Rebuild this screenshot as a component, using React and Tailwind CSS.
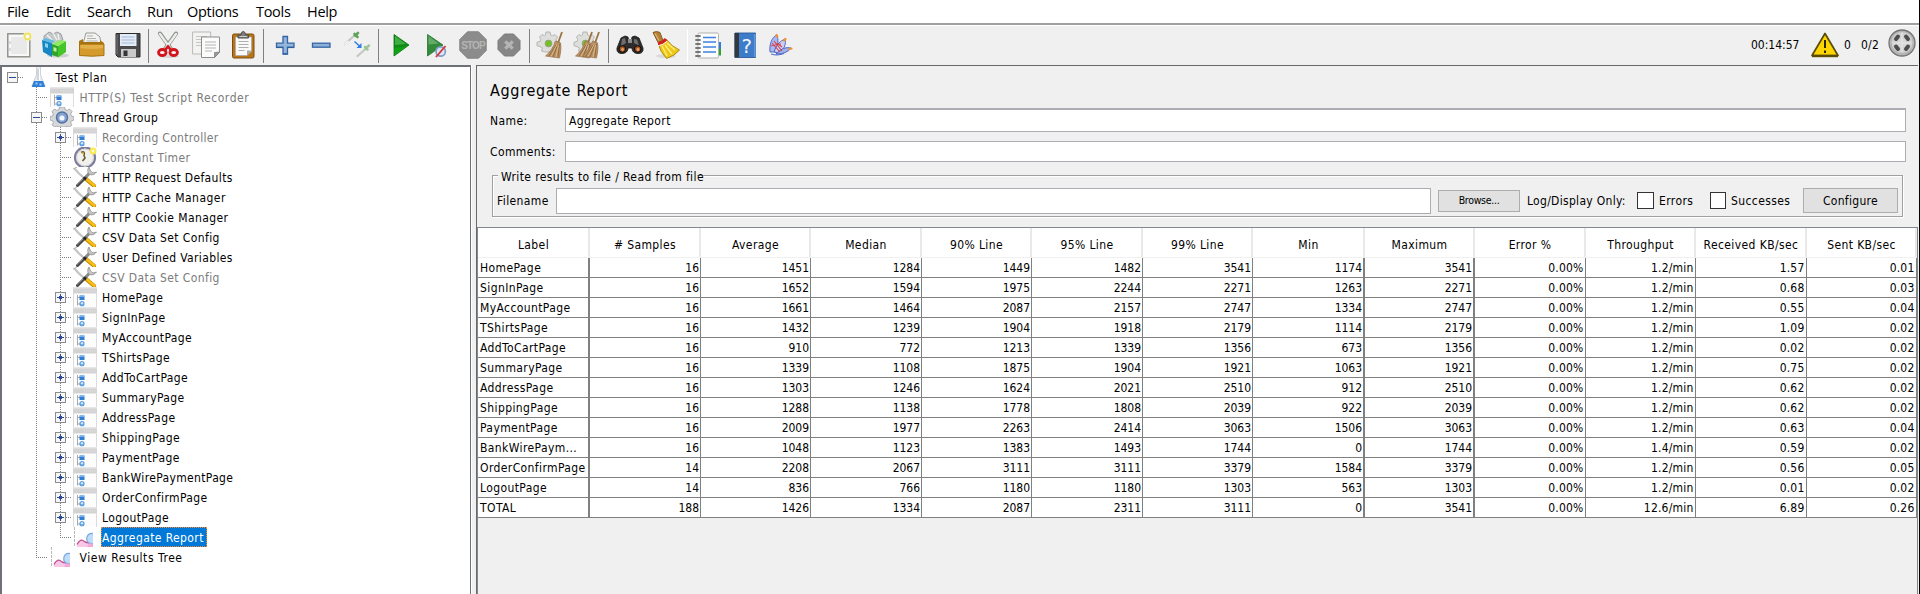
const MENU = [
  ['File', 'w-[39px]'],
  ['Edit', 'w-[41px]'],
  ['Search', 'w-[60px]'],
  ['Run', 'w-[40px]'],
  ['Options', 'w-[69px]'],
  ['Tools', 'w-[51px]'],
  ['Help', 'w-[40px]'],
];

const HEADERS = ['Label', '# Samples', 'Average', 'Median', '90% Line', '95% Line', '99% Line', 'Min', 'Maximum', 'Error %', 'Throughput', 'Received KB/sec', 'Sent KB/sec'];

const ROWS = [
  ['HomePage', '16', '1451', '1284', '1449', '1482', '3541', '1174', '3541', '0.00%', '1.2/min', '1.57', '0.01'],
  ['SignInPage', '16', '1652', '1594', '1975', '2244', '2271', '1263', '2271', '0.00%', '1.2/min', '0.68', '0.03'],
  ['MyAccountPage', '16', '1661', '1464', '2087', '2157', '2747', '1334', '2747', '0.00%', '1.2/min', '0.55', '0.04'],
  ['TShirtsPage', '16', '1432', '1239', '1904', '1918', '2179', '1114', '2179', '0.00%', '1.2/min', '1.09', '0.02'],
  ['AddToCartPage', '16', '910', '772', '1213', '1339', '1356', '673', '1356', '0.00%', '1.2/min', '0.02', '0.02'],
  ['SummaryPage', '16', '1339', '1108', '1875', '1904', '1921', '1063', '1921', '0.00%', '1.2/min', '0.75', '0.02'],
  ['AddressPage', '16', '1303', '1246', '1624', '2021', '2510', '912', '2510', '0.00%', '1.2/min', '0.62', '0.02'],
  ['ShippingPage', '16', '1288', '1138', '1778', '1808', '2039', '922', '2039', '0.00%', '1.2/min', '0.62', '0.02'],
  ['PaymentPage', '16', '2009', '1977', '2263', '2414', '3063', '1506', '3063', '0.00%', '1.2/min', '0.63', '0.04'],
  ['BankWirePaym...', '16', '1048', '1123', '1383', '1493', '1744', '0', '1744', '0.00%', '1.4/min', '0.59', '0.02'],
  ['OrderConfirmPage', '14', '2208', '2067', '3111', '3111', '3379', '1584', '3379', '0.00%', '1.2/min', '0.56', '0.05'],
  ['LogoutPage', '14', '836', '766', '1180', '1180', '1303', '563', '1303', '0.00%', '1.2/min', '0.01', '0.02'],
  ['TOTAL', '188', '1426', '1334', '2087', '2311', '3111', '0', '3541', '0.00%', '12.6/min', '6.89', '0.26'],
];

const COLS = 'grid grid-cols-[112px_111px_110px_111px_110px_111px_110px_112px_110px_111px_110px_111px_110px]';
const WIDE_RULES = [0, 7, 8];

// label, depth, icon, expander ('+', '-' or none), disabled, tracking
const TREE = [
  ['Test Plan', 0, 'flask', '-', false, 'tracking-[0.5px]'],
  ['HTTP(S) Test Script Recorder', 1, 'ctrl', '', true, 'tracking-[0.57px]'],
  ['Thread Group', 1, 'gear', '-', false, 'tracking-[0.4px]'],
  ['Recording Controller', 2, 'ctrl', '+', true, 'tracking-[0.3px]'],
  ['Constant Timer', 2, 'timer', '', true],
  ['HTTP Request Defaults', 2, 'tools', '', false, 'tracking-[0.35px]'],
  ['HTTP Cache Manager', 2, 'tools', '', false, 'tracking-[0.47px]'],
  ['HTTP Cookie Manager', 2, 'tools', '', false, 'tracking-[0.42px]'],
  ['CSV Data Set Config', 2, 'tools', '', false],
  ['User Defined Variables', 2, 'tools', '', false, 'tracking-[0.36px]'],
  ['CSV Data Set Config', 2, 'tools', '', true],
  ['HomePage', 2, 'ctrl', '+', false],
  ['SignInPage', 2, 'ctrl', '+', false],
  ['MyAccountPage', 2, 'ctrl', '+', false, 'tracking-[0.35px]'],
  ['TShirtsPage', 2, 'ctrl', '+', false],
  ['AddToCartPage', 2, 'ctrl', '+', false],
  ['SummaryPage', 2, 'ctrl', '+', false],
  ['AddressPage', 2, 'ctrl', '+', false],
  ['ShippingPage', 2, 'ctrl', '+', false],
  ['PaymentPage', 2, 'ctrl', '+', false],
  ['BankWirePaymentPage', 2, 'ctrl', '+', false, 'tracking-[0.35px]'],
  ['OrderConfirmPage', 2, 'ctrl', '+', false],
  ['LogoutPage', 2, 'ctrl', '+', false],
  ['Aggregate Report', 2, 'chart', '', false],
  ['View Results Tree', 1, 'chart', '', false, 'tracking-[0.55px]'],
];

const TREE_ICONS = {
  flask: (
    <>
      <path d="M10.500 0h4v8L18.500 19.500H5.500L10 8z" fill="#e9edf0" />
      <path d="M10.500 0v8L6 19M14.500 0v8L19 19" fill="none" stroke="#c9d0d6" strokeWidth=".9" />
      <path d="M8 14h9l2.300 6H5.700z" fill="#2f7fd6" />
      <path d="M9.500 15.500h2v2h-2zM13.500 16.500h2v2h-2z" fill="#9cc8f5" />
      <path d="M12 2v11" stroke="#b4bdc6" />
      <path d="M13.500 2v11" stroke="#fff" />
    </>
  ),
  ctrl: (
    <>
      <path d="M0 0h24v20H0z" fill="#fdfdfd" />
      <path d="M0 0h24v6.500H0z" fill="#d3d3d3" />
      <path d="M0 0h24v1.500H0z" fill="#e6e6e6" />
      <path d="M11 4h11" stroke="#e4e4e4" strokeDasharray="1 1" />
      <path d="M.5 6v14M23.500 6v14" stroke="#dcdcdc" />
      <path d="M4.500 8v10.500M4.500 10.500H7M4.500 17H7" stroke="#a8a8a8" fill="none" />
      <rect x="6.500" y="8.500" width="5" height="4.500" fill="#2f7fd6" />
      <rect x="7" y="8.500" width="4" height="1.500" fill="#7db2ea" />
      <circle cx="9" cy="16.700" r="2.600" fill="#5b9fe3" />
      <circle cx="9" cy="16.300" r="1.200" fill="#cfe4fa" />
    </>
  ),
  gear: (
    <>
      <path d="M9.500 0h5l.6 2.600 2.200.8L19.500 2l2.500 2.500L20.600 7l.8 2 2.600.7v3.300l-2.600.8-.8 2 1.400 2L19.500 20l-2.200-.8-2.200.8H8.900l-2.200-.8L4.500 20 2 17.800l1.400-2-.8-2L0 13V9.700L2.600 9l.8-2L2 4.500 4.500 2l2.200 1.400 2.200-.8z" fill="#d6d7d9" stroke="#a3a5a9" strokeWidth=".9" />
      <circle cx="12" cy="10.500" r="6.200" fill="#54709f" />
      <circle cx="12" cy="10.500" r="4.800" fill="#86a2d0" />
      <circle cx="12" cy="11" r="2.600" fill="#f3f6fa" />
    </>
  ),
  timer: (
    <>
      <circle cx="12" cy="10.500" r="10" fill="#f1f1ee" stroke="#7f7d9c" strokeWidth="2.200" />
      <circle cx="12" cy="10.500" r="8.300" fill="none" stroke="#d5d5d5" />
      <path d="M8 5.500c3-1.500 4 0 3 3l1 2.500-2.500 3" fill="none" stroke="#6b5b36" strokeWidth="1.600" />
      <path d="M8 5l3 .5v3z" fill="#caa63c" />
      <circle cx="20" cy="4" r="3.500" fill="#f7e94e" />
      <circle cx="20" cy="4" r="1.500" fill="#fffbd0" />
    </>
  ),
  tools: (
    <>
      <path d="M1.500 1.500l4 4.500 6 5.500" stroke="#c4c4c4" strokeWidth="2.200" fill="none" />
      <path d="M0 2l4-2" stroke="#b0b0b0" />
      <path d="M13 12l8 6.800" stroke="#b98200" strokeWidth="4" strokeLinecap="round" />
      <path d="M13.500 12l7.700 6.600" stroke="#f6bd14" strokeWidth="2.800" strokeLinecap="round" />
      <path d="M4.500 18.500L13 10" stroke="#4a4a4a" strokeWidth="3" strokeLinecap="round" />
      <path d="M4 17.500L11 11" stroke="#999" strokeWidth="1" />
      <path d="M13 10l3.500-4" stroke="#8b8b8b" strokeWidth="3" />
      <path d="M16 0c-2 2.500-1.500 6.500 1 7.500s4.500 0 6.500-2.500l-3.500 1-2.500-2z" fill="#c9c9c9" stroke="#8d8d8d" strokeWidth=".8" />
      <path d="M10.500 10.500l2.500 2" stroke="#222" strokeWidth="2" />
    </>
  ),
  chart: (
    <>
      <path d="M1.500 0v20" stroke="#b9b9b9" strokeDasharray="3 1" />
      <path d="M4 20v-2.500c2-3.500 4-5 6-4s2.500 1.500 4 .5 3-1.500 6 .5V20z" fill="#f8c8e6" />
      <path d="M4 17.500c2-3.500 4-5 6-4 2 1.200 2.500 2.500 6 2.500" fill="none" stroke="#c0498f" strokeWidth="1.200" />
      <path d="M20 6.500c-4-.5-6.500 2-6.300 5.500s2.500 5 6.300 4.500z" fill="#bfdcf8" />
      <path d="M20 6.500c-4-.5-6.500 2-6.300 5.500s2.500 5 6.300 4.500" fill="none" stroke="#7ba7e0" strokeWidth="1.200" />
      <path d="M16 16.500h4V20h-6z" fill="#f3a8d8" />
    </>
  ),
};

function Guide({ first, rule, tee, box, cap }) {
  const end = cap ? 10.5 : 20;
  return (
    <svg className={first ? 'h-5 w-[22px] shrink-0' : 'h-5 w-6 shrink-0'} viewBox={first ? '2 0 22 20' : '0 0 24 20'} shapeRendering="crispEdges">
      {rule && <path d={`M12.500 0V${end}`} stroke="#808080" strokeDasharray="1 1" />}
      {tee && <path d="M12 10.500H24" stroke="#808080" strokeDasharray="1 1" />}
      {box && (
        <>
          <rect x="7.500" y="5.500" width="10" height="10" fill="#f6f6f6" stroke="#8c8c8c" />
          <path d="M9 10h7v1H9z" fill="#2c4a96" />
          {box === '+' && <path d="M12 7h1v7h-1zM10 10h5v1h-5zM11 9h3v3h-3z" fill="#2c4a96" />}
        </>
      )}
    </svg>
  );
}

function TreeRow({ item }) {
  const [label, depth, icon, box, off, tracking = 'tracking-[0.4px]'] = item;
  const last = label === 'View Results Tree';
  const selected = label === 'Aggregate Report';
  return (
    <div className="flex h-5">
      {depth === 0 && <Guide first tee box={box} />}
      {depth > 0 && <Guide first />}
      {depth === 1 && <Guide rule tee box={box} cap={last} />}
      {depth === 2 && <Guide rule />}
      {depth === 2 && <Guide rule tee box={box} cap={selected} />}
      <svg className={depth === 2 ? 'ml-px h-5 w-6 shrink-0' : 'ml-0.5 h-5 w-6 shrink-0'} viewBox="0 0 24 20">
        {TREE_ICONS[icon]}
      </svg>
      {selected ? (
        <span className="ml-1 h-5 w-[106px] bg-[#0078d7] pt-px pl-px leading-5 text-white outline-1 -outline-offset-1 outline-dotted outline-[#ff8728]">
          {label}
        </span>
      ) : (
        <span className={`${off ? 'text-[#7b7b7b]' : 'text-black'} ${depth === 2 ? 'ml-[5px]' : 'ml-[5.5px]'} ${tracking} pt-px leading-5`}>{label}</span>
      )}
    </div>
  );
}

const BROOM = (
  <>
    <path d="M26 1L22 12" stroke="#9a7340" strokeWidth="1.800" />
    <path d="M19.500 10l5 2c1 5 0 10-1 15L9.500 25c4.500-3.500 8-9 10-15z" fill="#bb9162" stroke="#96704a" strokeWidth=".7" />
    <path d="M13 25l7-11M17 26l4.500-12M22 26l1.500-13" stroke="#87643c" strokeWidth=".8" />
    <path d="M15 25.500l6-12M20 26l2.500-12" stroke="#dcb98c" strokeWidth=".9" />
  </>
);

const COG = (
  <>
    <path d="M10 1h4l.6 3 2 .8L19 3.500 21.500 6 20 8.500l1 2 3 .7v3.500l-3 .8-4 5-3.500.5H9l-3.500-1L6.500 17 4 15.500l-3-.8v-3.500l3-.7.8-2L3.500 6 6 3.500l2.400 1.300 1-.8z" fill="#dedfdd" stroke="#aeb0ad" strokeWidth=".9" />
    <circle cx="12.500" cy="12.500" r="3.400" fill="#73c31c" stroke="#999" strokeWidth=".8" />
  </>
);

const ICONS = {
  fresh: (
    <>
      <rect x="2.800" y="2.800" width="22" height="23" fill="#f8f8f8" stroke="#8b8b86" strokeWidth="1.400" />
      <rect x="6" y="6" width="16" height="17" fill="#e9e9ea" />
      <path d="M5 10v3M5 17v3" stroke="#bbb" />
      <circle cx="22.500" cy="5.500" r="4.500" fill="#f9f1a0" />
      <circle cx="22.500" cy="5.500" r="2.800" fill="#fff" stroke="#ecdc5c" strokeWidth="1.400" />
    </>
  ),
  templates: (
    <>
      <ellipse cx="17" cy="24.500" rx="11" ry="2" fill="#cfcfcf" />
      <path d="M3 5l5-4 4 2 4-2 4 2 2 6-8 5L3 12z" fill="#c5c8c8" stroke="#8c9090" strokeWidth=".8" />
      <path d="M6 4l5 5M12 2l4 7M17 3l1 6" stroke="#eef0f0" strokeWidth="1.500" />
      <path d="M1 9l10 3v14L2 21z" fill="#1787c4" />
      <path d="M1 9l4-2 9 3-3 2z" fill="#5fbbe6" />
      <path d="M4 12v4l3 1v-4z" fill="#8cd3f3" />
      <path d="M11 13l6 2v11l-6-2z" fill="#2fa32a" />
      <path d="M17 15l8-5v11l-8 5.500z" fill="#45c528" />
      <path d="M11 13l8-4 6 1-8 5z" fill="#8aea62" />
      <path d="M12.500 16v4l3 1v-4z" fill="#b9f39a" />
    </>
  ),
  open: (
    <>
      <path d="M5 13L8 2h9l5 4 1 8z" fill="#f2f2f0" stroke="#90908c" strokeWidth=".9" />
      <path d="M9 5h6M9 7.500h9M8.500 10h11" stroke="#b3b3b0" />
      <path d="M1 10l4-2v3h17v-2l4 3v12H1z" fill="#a87512" />
      <path d="M1.500 13h24.500v11.500q-12 1.500-24.500 0z" fill="#d49a2b" stroke="#a06d0b" strokeWidth=".9" />
      <path d="M2.500 14h22.500v3q-11 2-22.500 0z" fill="#e3b04a" />
    </>
  ),
  save: (
    <>
      <path d="M2 2.500h24v23.500H4l-2-2z" fill="#4a4a4c" stroke="#2c2c2e" />
      <rect x="6" y="3" width="16.500" height="12" fill="#e4ecf7" />
      <path d="M7.500 6h13M7.500 9h13M7.500 12h13" stroke="#a3b9d8" />
      <rect x="7" y="18" width="15" height="8" fill="#c9c9c9" />
      <rect x="9.500" y="19.500" width="4" height="5.500" fill="#343436" />
      <path d="M3 3.500v20" stroke="#7b7b7d" />
    </>
  ),
  cut: (
    <>
      <ellipse cx="15" cy="25.500" rx="10" ry="1.500" fill="#d5d5d5" />
      <path d="M6 2.500L17 18" stroke="#8d8f8c" strokeWidth="4" strokeLinecap="round" />
      <path d="M22 2.500L11 18" stroke="#8d8f8c" strokeWidth="4" strokeLinecap="round" />
      <path d="M6 3l10.500 14.500M22 3L11.500 17.500" stroke="#eceeec" strokeWidth="2.300" strokeLinecap="round" />
      <ellipse cx="8.300" cy="21.500" rx="3.800" ry="3" fill="#f4f4f4" stroke="#d3141c" strokeWidth="2.800" />
      <ellipse cx="19.700" cy="21.500" rx="3.800" ry="3" fill="#f4f4f4" stroke="#d3141c" strokeWidth="2.800" />
      <path d="M11 19l3-3.500 3 3.500" stroke="#d3141c" strokeWidth="2.500" fill="none" />
    </>
  ),
  copy: (
    <>
      <path d="M.6 1h18v22H.6z" fill="#f3f3f2" stroke="#b9bab7" />
      <path d="M4 5.500h11M4 8.500h11M4 11.500h5M4 14.500h5" stroke="#c6c6c4" />
      <path d="M9.500 6h18v15l-5 5.500h-13z" fill="#fbfbfb" stroke="#8d8e8b" />
      <path d="M13 11h11M13 14h11M13 17h11M13 20h7" stroke="#b4b5b2" />
      <path d="M27.500 21l-5 5.500v-5z" fill="#9b9c99" stroke="#777" strokeWidth=".7" />
    </>
  ),
  paste: (
    <>
      <rect x="3.500" y="3" width="21.500" height="24" rx="1.500" fill="#b9741a" stroke="#804e0d" />
      <path d="M6.500 6h16v14l-4.500 4.500H6.500z" fill="#fafafa" stroke="#a9a9a9" strokeWidth=".7" />
      <path d="M22.500 19.500L18 24.500v-5z" fill="#a8a8a5" />
      <path d="M9.500 10.500h10M9.500 13.500h10M9.500 16.500h10M9.500 19.500h6" stroke="#aeb0ad" />
      <path d="M9 7V4h3q0-3.500 2.200-3.500T16.500 4h3v3z" fill="#7d7f7c" stroke="#4e504d" />
      <path d="M10.500 5.500h7.500" stroke="#d0d2cf" />
    </>
  ),
  plus: (
    <>
      <path d="M12 5.500h4.500v6.700H23v4h-6.500V23H12v-6.800H5.500v-4H12z" fill="#94b6dc" stroke="#3465a4" strokeWidth="1.300" />
      <path d="M5 16.600h6.700M16.800 16.600H23M12 23h4.500" stroke="#2b5a9a" />
    </>
  ),
  minus: <rect x="5.500" y="12.200" width="17.500" height="4" fill="#8cb0da" stroke="#3465a4" strokeWidth="1.300" />,
  toggle: (
    <>
      <path d="M2 13l10-9" stroke="#c3c8c2" strokeWidth="2.200" strokeLinecap="round" />
      <path d="M1.500 13.500l4-3.500" stroke="#fff" strokeWidth="1.200" />
      <path d="M12 4.500l3-2.500M11.500 3l3 3" stroke="#5fa259" strokeWidth="2.600" strokeLinecap="round" />
      <path d="M14.500 25l8-7" stroke="#c3c8c2" strokeWidth="2.200" strokeLinecap="round" />
      <path d="M22.500 17.500l3.500-3M22 16l2.500 2.500" stroke="#9cc697" strokeWidth="2.500" strokeLinecap="round" />
      <path d="M11.500 10.500l5.500 5" stroke="#2f7de0" strokeWidth="1.500" />
      <path d="M18.500 12v5h-5z" fill="#2f7de0" />
    </>
  ),
  play: (
    <>
      <path d="M7 3.500L22 14 7 25z" fill="#138a18" stroke="#0b7412" strokeWidth=".8" />
      <path d="M8 5l11 8-11 1z" fill="#3fae42" />
      <path d="M7.500 17l12-1.500-12 8.700z" fill="#0fa314" />
    </>
  ),
  playNo: (
    <>
      <path d="M4.500 3.500L20 14 4.500 25z" fill="#348a3b" stroke="#23752a" strokeWidth=".8" />
      <path d="M5.500 5l10 7.500-10 1z" fill="#64ab69" />
      <circle cx="17.700" cy="20.500" r="4.700" fill="#dbe6f5" stroke="#7f9fca" strokeWidth="1.700" />
      <path d="M13 26l9.500-11" stroke="#d53838" strokeWidth="1.900" />
    </>
  ),
  halt: (
    <>
      <path d="M8.500.8h11l7.700 7.700v11l-7.700 7.700h-11L.8 19.500v-11z" fill="#8c8c8c" stroke="#838383" />
      <text x="14" y="17.800" textAnchor="middle" fontFamily="Liberation Sans, sans-serif" fontWeight="700" fontSize="10" letterSpacing="-.9" fill="#b4b4b4">STOP</text>
    </>
  ),
  shutdown: (
    <>
      <path d="M9.500 3h9L25 9.500v9L18.500 25h-9L3 18.500v-9z" fill="#868686" stroke="#7b7b7b" />
      <path d="M10.300 10.300l7.400 7.400M17.700 10.300l-7.400 7.400" stroke="#b5b5b5" strokeWidth="3.200" />
    </>
  ),
  clear: <>{COG}{BROOM}</>,
  clearAll: (
    <>
      {COG}
      <g transform="translate(-7 0)">{BROOM}</g>
      {BROOM}
    </>
  ),
  find: (
    <>
      <path d="M5 7l4-2 3 1 1 5h2l1-5 3-1 4 2 4 10c.5 4-1.500 5.500-5 5.500S16 20.500 16 17h-4c0 3.500-2.500 5.500-6 5.500S.5 21 1 17z" fill="#2d2d2d" stroke="#151515" strokeWidth=".8" />
      <path d="M6 8l3-1 1 5-5 3zM18 8l3 .500 2 6-5-2.500z" fill="#6e6e6e" />
      <path d="M12 8h4v4h-4z" fill="#8c8c8c" />
      <circle cx="6.300" cy="18" r="3.300" fill="#a3521a" stroke="#0c0c0c" />
      <circle cx="21.700" cy="18" r="3.300" fill="#a3521a" stroke="#0c0c0c" />
      <circle cx="6.600" cy="18.500" r="1.400" fill="#e3a270" />
      <circle cx="22" cy="18.500" r="1.400" fill="#e3a270" />
    </>
  ),
  reset: (
    <>
      <ellipse cx="14" cy="25" rx="10" ry="2" fill="#d9d9d9" />
      <path d="M1 1.500q3.500-2 7 0l3 8-5 2z" fill="#b57f3a" stroke="#7f5519" strokeWidth=".9" />
      <path d="M3 2.500l4 7" stroke="#dfb274" strokeWidth="1.300" />
      <path d="M14.500 8.500q5 7 13 10.500-5 6-13 8.500Q7.500 20 6.500 13z" fill="#ecc81c" stroke="#a88808" strokeWidth=".9" />
      <path d="M10 15l5 10M13 14l7 9M15 12l8 7" stroke="#fff07a" strokeWidth="1.300" />
      <path d="M6 13q5-1 8-5" fill="none" stroke="#d3221d" strokeWidth="3" />
      <path d="M6 14.800q6-1 9-4.500" fill="none" stroke="#f8f8f8" strokeWidth="1" />
    </>
  ),
  list: (
    <>
      <rect x="23" y="11" width="4" height="7" fill="#2f7de0" />
      <rect x="23" y="18" width="4" height="6.500" fill="#2ea529" />
      <rect x="4" y="2" width="20.500" height="25" rx="1.500" fill="#fcfcfc" stroke="#b0b0b0" />
      <path d="M2 5h4M2 9h4M2 13h4M2 17h4M2 21h4M2 25h4" stroke="#777" strokeWidth="1.800" strokeLinecap="round" />
      <path d="M9 6.500h13M9 11h13M9 16h13M9 21h13" stroke="#3a83e0" strokeWidth="1.300" />
    </>
  ),
  help: (
    <>
      <path d="M4 2h20.500v24.500H4z" fill="#3d7cc9" stroke="#2a5a99" strokeWidth=".9" />
      <path d="M3.500 2h4.500v24.500H3.500z" fill="#33383f" />
      <path d="M24 3v23" stroke="#83b4ea" />
      <text x="15.800" y="21.500" textAnchor="middle" fontFamily="DejaVu Sans Mono, monospace" fontSize="20" fill="#f2f7fd">?</text>
    </>
  ),
  feather: (
    <>
      <path d="M3 21C2 13 5 6 10 4q2.500 7-1 17z" fill="#aab9ee" stroke="#4760c4" strokeWidth=".9" />
      <path d="M7 21Q10 11 18 8q2 7-5 14z" fill="#c7d1f5" stroke="#4760c4" strokeWidth=".9" />
      <path d="M9 23q7-8 15-6-4 6-15 6z" fill="#9fb0ea" stroke="#4760c4" strokeWidth=".9" />
      <path d="M5 12l8 9M7 10l8 10M4 15q7-2 10-2M10 12l5 4" stroke="#d8414d" strokeWidth="1.100" fill="none" />
      <path d="M9.500 4l.8 1.500M18.500 8l-1.500 1.500M24.500 17.500l-2 .5" stroke="#f0922c" strokeWidth="2.200" strokeLinecap="round" />
      <path d="M4 23q7 2 13-.5" stroke="#5a72cf" fill="none" strokeWidth="1.300" />
    </>
  ),
  warn: (
    <>
      <path d="M14 2.500L27 24.500H1z" fill="#fdd400" stroke="#5a4b08" strokeWidth="1.700" strokeLinejoin="round" />
      <path d="M1 25h26" stroke="#5a4b08" strokeWidth="2.400" />
      <path d="M14 9v8M14 19.500v2.500" stroke="#2a2408" strokeWidth="2" />
    </>
  ),
  status: (
    <>
      <circle cx="14" cy="14" r="13" fill="#b5b5b5" stroke="#747474" strokeWidth="1.300" />
      <circle cx="14" cy="13.500" r="10.500" fill="#cfcfcf" />
      <path d="M8 10l2-2.500M18 7.500l2 2.500M8 17.500l2 2.500M18 20l2-2.500" stroke="#4d4d4d" strokeWidth="4" strokeLinecap="round" />
      <circle cx="14" cy="14" r="4.500" fill="#d8d8d8" />
      <path d="M14 4v19M4.500 14h19" stroke="#e2e2e2" strokeWidth="1.500" />
    </>
  ),
};

function Icon({ name }) {
  return (
    <svg className="size-7 shrink-0 overflow-visible" viewBox="0 0 28 28">
      {ICONS[name]}
    </svg>
  );
}

const GROUPS = [
  { box: 'w-[147px] pl-1 pr-1.5', rule: true, icons: ['fresh', 'templates', 'open', 'save'] },
  { box: 'w-[114px] pl-[5px] pr-1.5', rule: true, icons: ['cut', 'copy', 'paste'] },
  { box: 'w-[114px] pl-[7px] pr-[7px]', rule: true, icons: ['plus', 'minus', 'toggle'] },
  { box: 'w-[150px] pl-[8px] pr-[6px]', rule: true, icons: ['play', 'playNo', 'halt', 'shutdown'] },
  { box: 'w-[78px] pl-[6px] pr-[7px]', rule: true, icons: ['clear', 'clearAll'] },
  { box: 'w-[78px] pl-[7px] pr-[7px]', light: true, icons: ['find', 'reset'] },
  { box: 'w-[114px] pl-[6px] pr-[7px]', icons: ['list', 'help', 'feather'] },
];

export default function App() {
  return (
    <div className="flex h-[594px] w-[1920px] overflow-hidden border-r border-black bg-[#f0f0f0] font-['DejaVu_Sans_Condensed','DejaVu_Sans',sans-serif] text-[12px] tracking-[0.4px] text-black">
      <div className="flex min-w-0 grow flex-col">
        <nav className="flex h-[23px] shrink-0 bg-white pl-[7px] font-['Open_Sans',sans-serif] text-[14.5px] leading-6 tracking-[-0.3px]">
          {MENU.map(([name, width]) => (
            <span key={name} className={`${width} shrink-0`}>{name}</span>
          ))}
        </nav>

        <div className="flex h-[42px] shrink-0 border-t-2 border-[#a0a0a0]">
          <div className="flex grow border-t border-white pt-[3px]">
            <div className="flex h-[34px] pl-px">
              {GROUPS.map((g, i) => (
                <div key={i} className="flex">
                  <div className={`${g.box} flex shrink-0 items-center justify-between pb-0.5`}>
                    {g.icons.map((n) => <Icon key={n} name={n} />)}
                  </div>
                  {g.rule && <div className="w-px bg-[#7f7f7f]" />}
                  {g.light && <div className="w-px bg-white" />}
                </div>
              ))}
            </div>
            <div className="ml-auto flex h-[34px] items-center pr-[3px] pb-0.5">
              <span className="w-[60px] tracking-normal">00:14:57</span>
              <Icon name="warn" />
              <span className="ml-[5px] w-[17px]">0</span>
              <span className="w-[27px] tracking-[0.2px]">0/2</span>
              <div className="flex pb-1"><Icon name="status" /></div>
            </div>
          </div>
        </div>

        <div className="flex min-h-0 grow">
          <div className="flex w-[471px] shrink-0 flex-col border-t-2 border-r border-l-2 border-[#6f7178] bg-white">
            {TREE.map((item, i) => <TreeRow key={i} item={item} />)}
          </div>
          <div className="w-[5px] shrink-0 border-l border-white" />

          <div className="flex w-[1442px] shrink-0 flex-col border-t border-l border-[#696969]">
            <h1 className="mt-[13px] h-[29px] pl-[13px] text-[16px] leading-6 tracking-[0.68px]">Aggregate Report</h1>

            <div className="flex h-6 items-center pl-[13px]">
              <label className="w-[75px] pt-px">Name:</label>
              <div className="flex h-6 w-[1341px] items-center border border-t-2 border-[#abadb3] bg-white pl-[3px]">Aggregate Report</div>
            </div>
            <div className="mt-[9px] flex h-[21px] items-center pl-[13px]">
              <label className="w-[75px]">Comments:</label>
              <div className="h-[21px] w-[1341px] border border-[#abadb3] bg-white" />
            </div>

            <div className="mt-[13px] ml-[15px] h-[42px] w-[1411px] border border-[#a0a0a0] shadow-[1px_1px_0_#fff,inset_1px_1px_0_#fff]">
              <div className="-mt-[5px] ml-[5px] h-[15px] w-[199px] bg-[#f0f0f0] pl-[3px] leading-[12px] tracking-[0.39px] whitespace-nowrap">Write results to file / Read from file</div>
              <div className="flex h-[28px] items-center pt-px pl-1">
                <label className="w-[59px]">Filename</label>
                <div className="h-[26px] w-[875px] border border-[#abadb3] bg-white" />
                <button className="ml-[7px] h-[22px] w-[82px] border border-[#adadad] bg-[#e1e1e1] text-[10.5px] tracking-[-0.3px]">Browse...</button>
                <span className="ml-[7px] w-[110px] tracking-[0.3px]">Log/Display Only:</span>
                <span className="size-[17px] border border-[#333] bg-white" />
                <span className="ml-[5px] w-[51px]">Errors</span>
                <span className="h-[17px] w-4 border border-[#333] bg-white" />
                <span className="ml-[5px] w-[72px]">Successes</span>
                <button className="h-[25px] w-[95px] border border-[#adadad] bg-[#e1e1e1] tracking-[0.3px]">Configure</button>
              </div>
            </div>

            <div className="mt-[10px] flex min-h-0 grow flex-col border-t border-r border-l border-[#828790]">
              <div className={`${COLS} h-[30px] border-b border-[#f0f0f0] bg-white`}>
                {HEADERS.map((h) => (
                  <div key={h} className="border-r-2 border-[#e9e9e9] pt-[5px] pl-px text-center leading-6 whitespace-nowrap">{h}</div>
                ))}
              </div>
              {ROWS.map((row) => (
                <div key={row[0]} className={`${COLS} h-5 bg-white`}>
                  {row.map((v, i) => (
                    <div
                      key={i}
                      className={`${WIDE_RULES.includes(i) ? 'border-r-2' : 'border-r'} ${i === 0 ? 'pl-0.5' : i > 8 ? 'pr-[1.5px] text-right tracking-[0.2px]' : 'pr-px text-right tracking-[-0.05px]'} h-5 border-b border-[#808080] pt-px leading-[18px] whitespace-nowrap`}
                    >
                      {v}
                    </div>
                  ))}
                </div>
              ))}
            </div>
          </div>
        </div>
      </div>
    </div>
  );
}
